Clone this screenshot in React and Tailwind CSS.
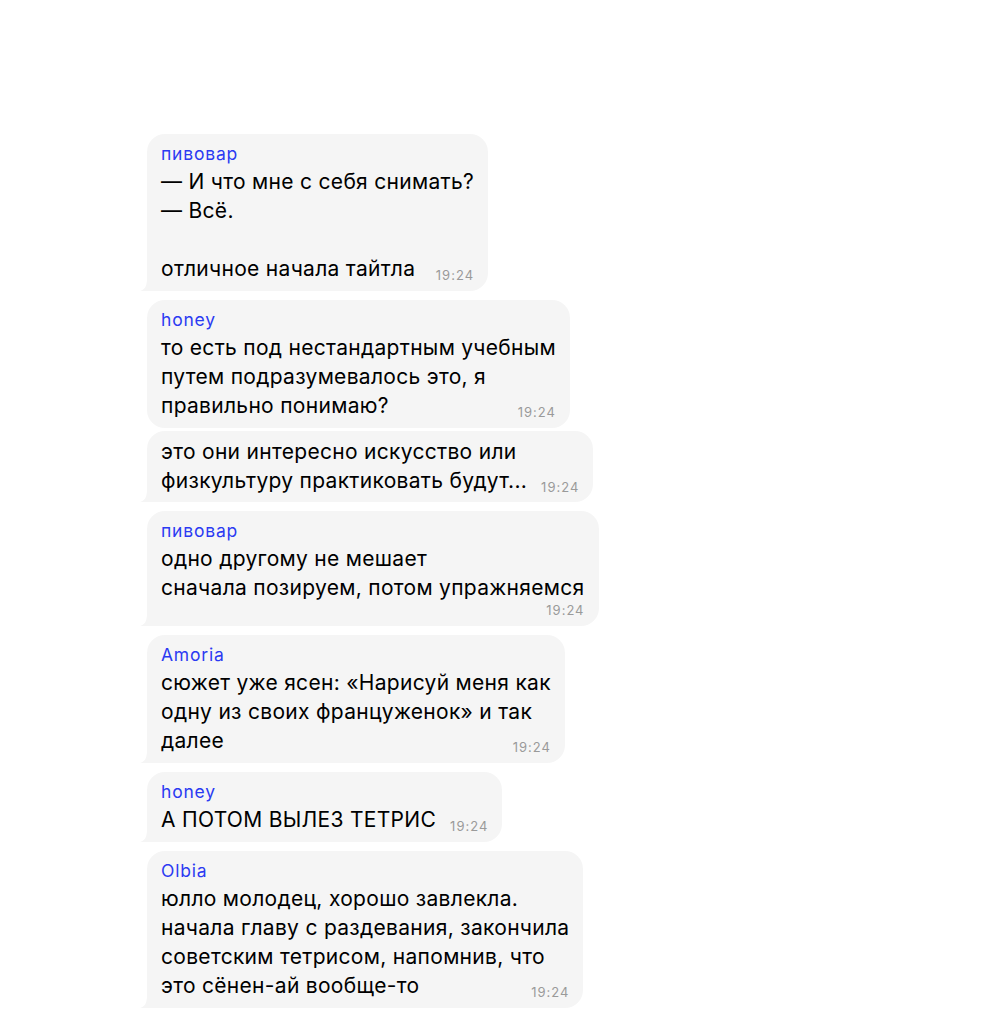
import React from 'react';

const messages = [
  {
    name: 'пивовар',
    lines: ['— И что мне с себя снимать?', '— Всё.', '', 'отличное начала тайтла'],
    tail: true,
  },
  {
    name: 'honey',
    lines: ['то есть под нестандартным учебным', 'путем подразумевалось это, я', 'правильно понимаю?'],
  },
  {
    lines: ['это они интересно искусство или', 'физкультуру практиковать будут...'],
    tail: true,
  },
  {
    name: 'пивовар',
    lines: ['одно другому не мешает', 'сначала позируем, потом упражняемся'],
    timeOwnRow: true,
    tail: true,
  },
  {
    name: 'Amoria',
    lines: ['сюжет уже ясен: «Нарисуй меня как', 'одну из своих француженок» и так', 'далее'],
    tail: true,
  },
  {
    name: 'honey',
    lines: ['А ПОТОМ ВЫЛЕЗ ТЕТРИС'],
    tail: true,
  },
  {
    name: 'Olbia',
    lines: [
      'юлло молодец, хорошо завлекла.',
      'начала главу с раздевания, закончила',
      'советским тетрисом, напомнив, что',
      'это сёнен-ай вообще-то',
    ],
    tail: true,
  },
];

const Time = ({ own }) => (
  <span
    className={`text-[13px] leading-[16px] tracking-[1px] text-[#9a9a9a] whitespace-nowrap ${own ? '' : 'pl-[14px] ml-auto'}`}
  >
    19:24
  </span>
);

const Tail = () => (
  <svg
    className="absolute left-[-7px] bottom-0"
    width="14"
    height="16"
    viewBox="0 0 14 16"
  >
    <path d="M14 0 L14 16 L0 16 C4 15 7 12 7 4 L7 0 Z" fill="#f5f5f5" />
  </svg>
);

const text = 'text-[21px] leading-[29px] tracking-[0.3px] text-black whitespace-nowrap';

const Bubble = ({ msg }) => {
  const body = msg.lines.slice(0, -1);
  const last = msg.lines[msg.lines.length - 1];
  return (
    <div
      className={`relative inline-flex flex-col bg-[#f5f5f5] rounded-[18px] px-[14px] pt-[6px] ${
        msg.name ? 'pb-[8px]' : 'pb-[7px]'
      } ${msg.tail ? 'rounded-bl-[4px]' : ''}`}
    >
      {msg.name && (
        <div className="text-[17.5px] leading-[27px] tracking-[0.8px] text-[#2b3af2]">{msg.name}</div>
      )}
      {body.map((line, i) => (
        <div key={i} className={`${text} h-[29px]`}>
          {line}
        </div>
      ))}
      {msg.timeOwnRow ? (
        <>
          <div className={text}>{last}</div>
          <div className="flex justify-end leading-[18px]">
            <Time own />
          </div>
        </>
      ) : (
        <div className="flex items-end">
          <span className={text}>{last}</span>
          <Time />
        </div>
      )}
      {msg.tail && <Tail />}
    </div>
  );
};

export default function App() {
  return (
    <div
      className="min-h-[1014px] w-[1000px] bg-white pt-[134px] pl-[147px]"
      style={{ fontFamily: 'Inter, "Noto Sans", sans-serif' }}
    >
      <div className="flex flex-col items-start">
        {messages.map((msg, i) => (
          <div key={i} className={i === 0 ? '' : messages[i - 1].tail ? 'mt-[9px]' : 'mt-[3px]'}>
            <Bubble msg={msg} />
          </div>
        ))}
      </div>
    </div>
  );
}
